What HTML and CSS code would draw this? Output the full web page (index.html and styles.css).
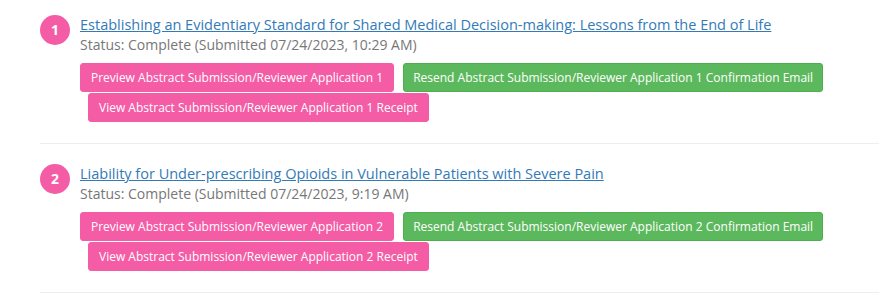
FILE: index.html
```html
<!DOCTYPE html>
<html>
<head>
  <meta charset="utf-8">
  <link rel="stylesheet" href="styles.css">
</head>
<body>
  <ul class="submission_list">
    <li class="submission">
      <span class="step_badge">1</span>
      <div class="submission_body">
        <a class="submission_title" href="#">Establishing an Evidentiary Standard for Shared Medical Decision-making: Lessons from the End of Life</a>
        <div class="submission_status">Status: Complete (Submitted 07/24/2023, 10:29 AM)</div>
        <div class="actions">
          <a class="btn btn_pink" href="#">Preview Abstract Submission/Reviewer Application 1</a>
          <a class="btn btn_green" href="#">Resend Abstract Submission/Reviewer Application 1 Confirmation Email</a>
          <a class="btn btn_pink btn_receipt" href="#">View Abstract Submission/Reviewer Application 1 Receipt</a>
        </div>
      </div>
    </li>
    <li class="submission">
      <span class="step_badge">2</span>
      <div class="submission_body">
        <a class="submission_title" href="#">Liability for Under-prescribing Opioids in Vulnerable Patients with Severe Pain</a>
        <div class="submission_status">Status: Complete (Submitted 07/24/2023, 9:19 AM)</div>
        <div class="actions">
          <a class="btn btn_pink" href="#">Preview Abstract Submission/Reviewer Application 2</a>
          <a class="btn btn_green" href="#">Resend Abstract Submission/Reviewer Application 2 Confirmation Email</a>
          <a class="btn btn_pink btn_receipt" href="#">View Abstract Submission/Reviewer Application 2 Receipt</a>
        </div>
      </div>
    </li>
  </ul>
</body>
</html>
```

FILE: styles.css
```css
body {
  margin: 0;
  background-color: white;
  font-family: "Open Sans", "Liberation Sans", sans-serif;
  font-size: 14px;
  line-height: 20px;
  color: #333;
}
.submission_list {
  list-style: none;
  margin: 0;
  padding: 0 0 0 40px;
}
.submission {
  display: flex;
  align-items: flex-start;
  padding: 20px 0 21px;
  border-bottom: 1px solid #eee;
}
.submission:first-child {
  padding-top: 15px;
}
.step_badge {
  flex-shrink: 0;
  width: 30px;
  height: 30px;
  margin-right: 10px;
  border-radius: 50%;
  background-color: #f45ca6;
  color: white;
  font-weight: bold;
  font-size: 14px;
  line-height: 30px;
  text-align: center;
}
.submission_body {
  flex: 1;
}
.submission_title {
  display: block;
  font-size: 14.5px;
  color: #337ab7;
  text-decoration: underline;
}
.submission_status {
  color: #777;
}
.actions {
  display: flex;
  flex-wrap: wrap;
  gap: 1px 9px;
  margin-top: 8px;
}
.btn {
  display: inline-block;
  padding: 5px 10px;
  border: 1px solid transparent;
  border-radius: 3px;
  font-size: 12px;
  line-height: 17px;
  color: white;
  text-decoration: none;
  white-space: nowrap;
}
.btn_pink {
  background-color: #f45ca6;
  border-color: #f45ca6;
}
.btn_green {
  background-color: #5cb85c;
  border-color: #4cae4c;
  padding: 5px 9px;
}
.btn_receipt {
  margin-left: 8px;
}
```
